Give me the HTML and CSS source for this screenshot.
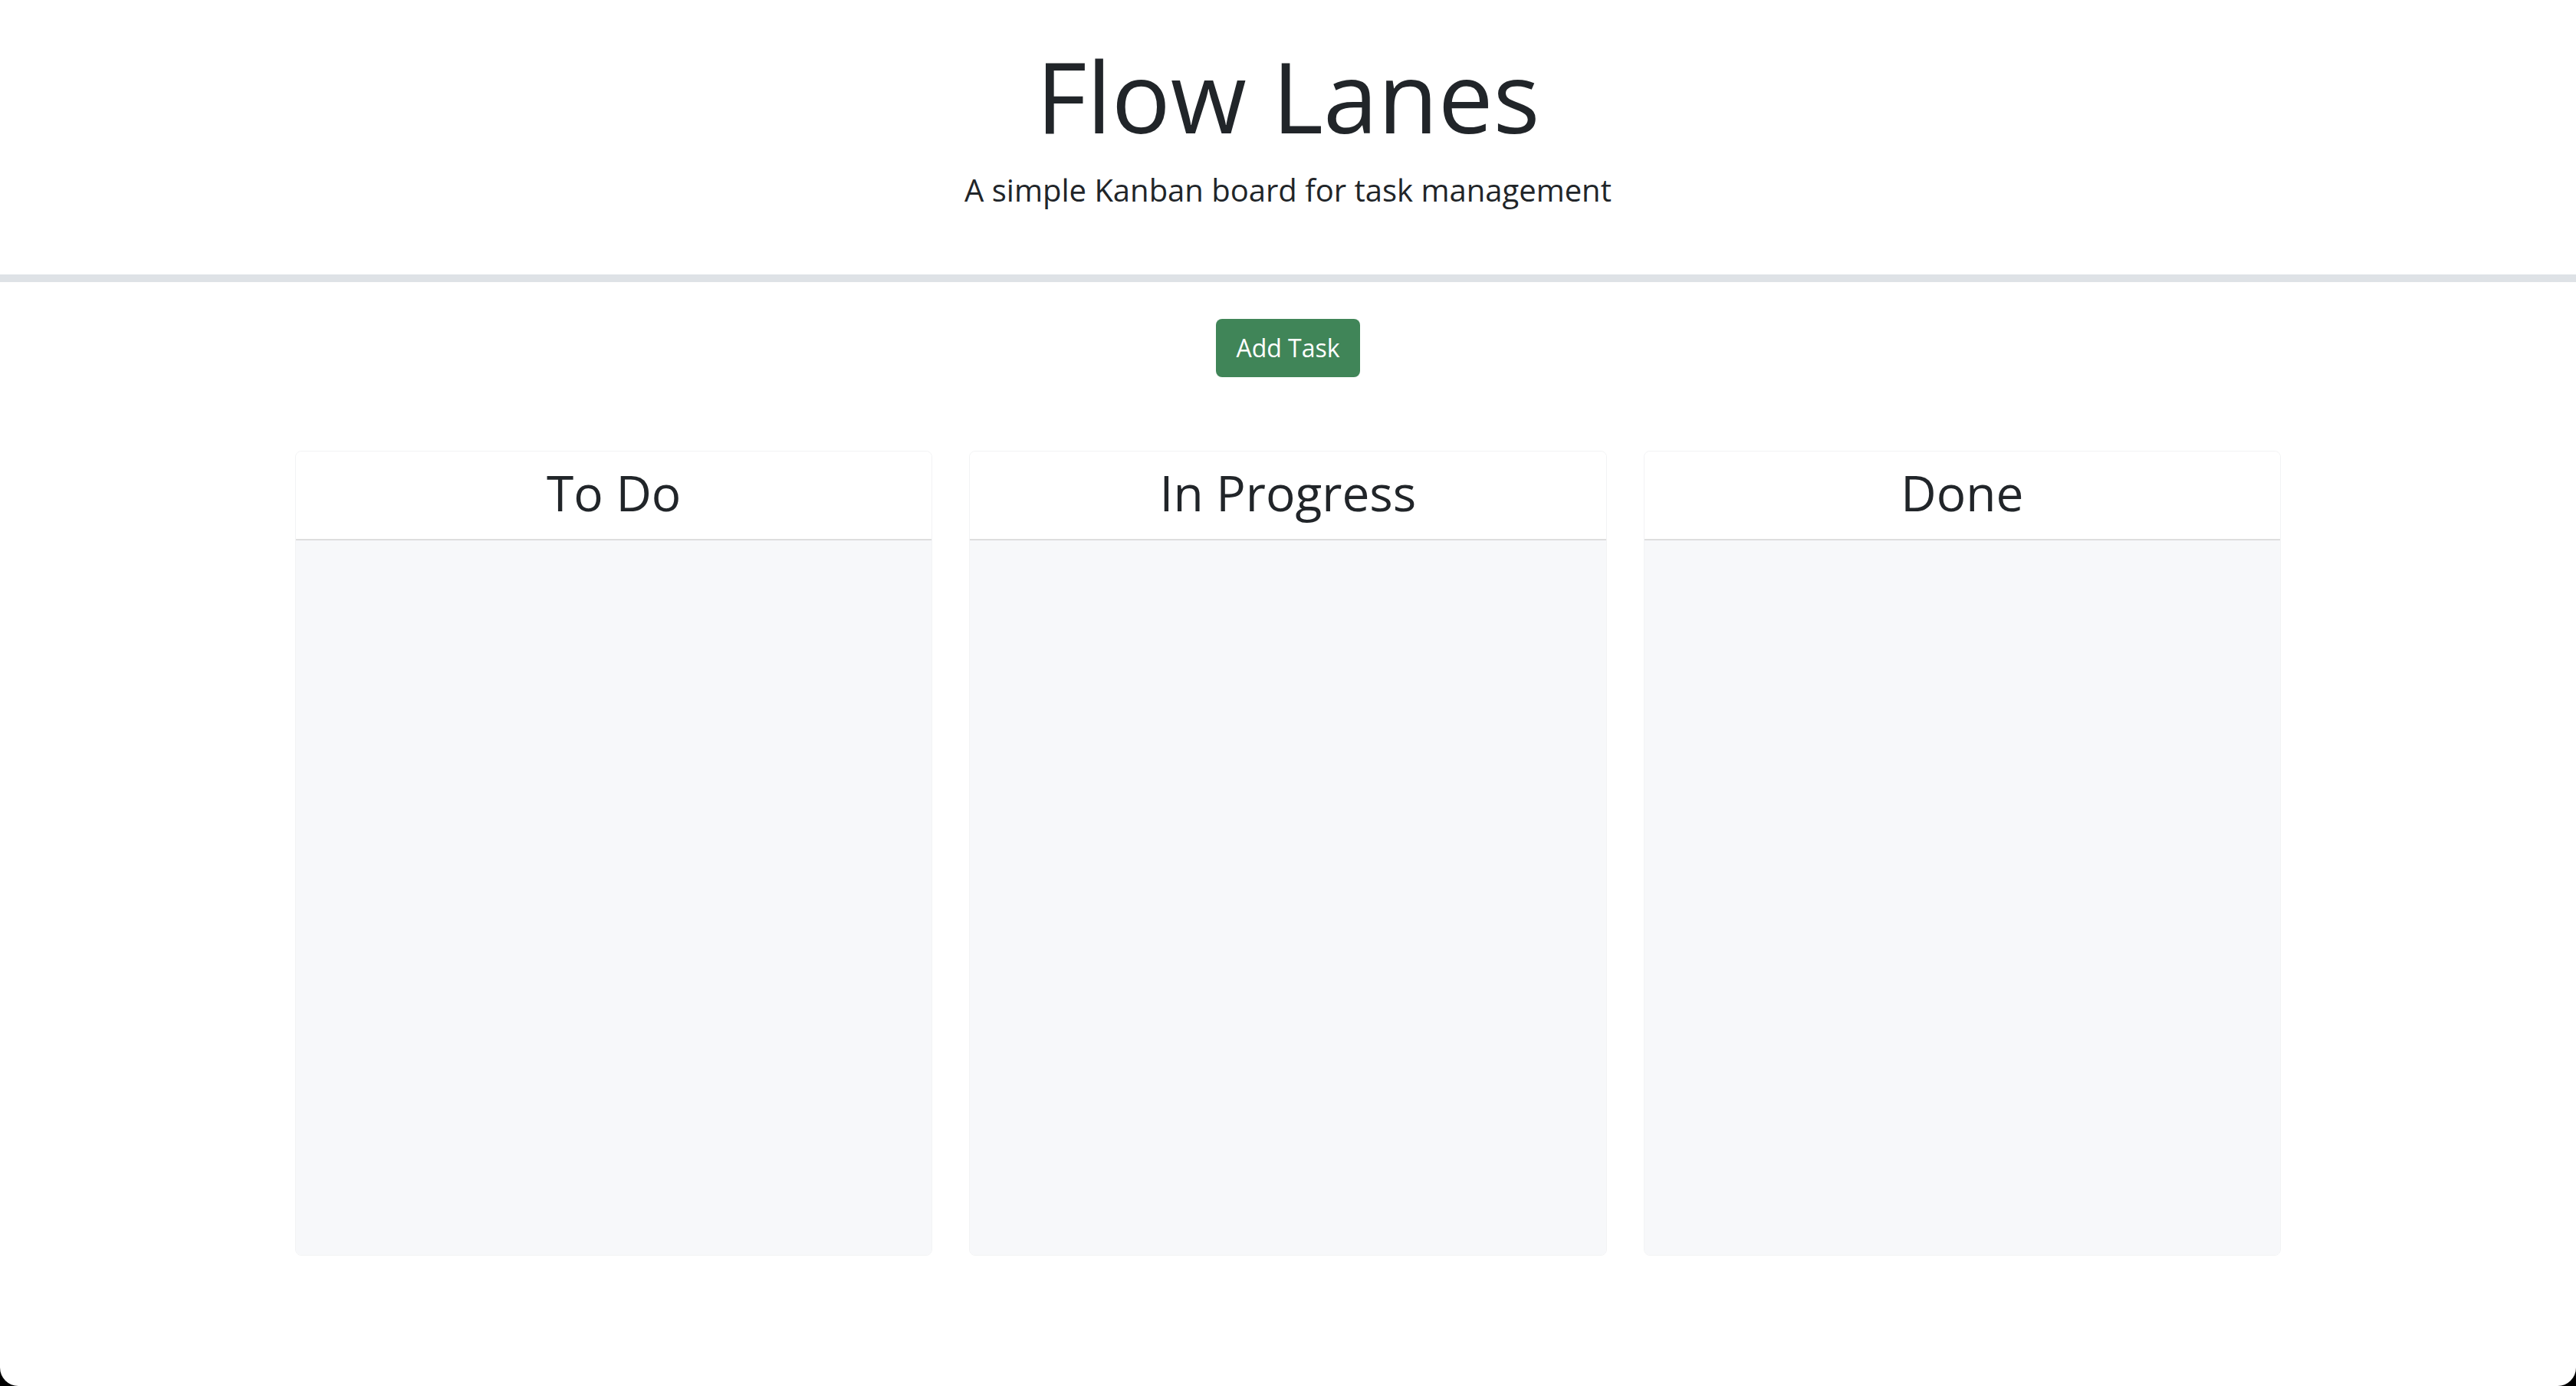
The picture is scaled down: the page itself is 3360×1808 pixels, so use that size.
FILE: index.html
```html
<!DOCTYPE html>
<html lang="en">
<head>
<meta charset="utf-8">
<title>Flow Lanes</title>
<link rel="stylesheet" href="styles.css">
</head>
<body>
<div class="page">
  <header class="hero">
    <h1 class="title">Flow Lanes</h1>
    <p class="lead">A simple Kanban board for task management</p>
  </header>
  <main class="board-wrap">
    <div class="actions">
      <button class="btn-add" type="button">Add Task</button>
    </div>
    <section class="board">
      <div class="lane">
        <div class="lane-head"><h2 class="lane-title">To Do</h2></div>
        <div class="lane-body"></div>
      </div>
      <div class="lane">
        <div class="lane-head"><h2 class="lane-title">In Progress</h2></div>
        <div class="lane-body"></div>
      </div>
      <div class="lane">
        <div class="lane-head"><h2 class="lane-title">Done</h2></div>
        <div class="lane-body"></div>
      </div>
    </section>
  </main>
</div>
</body>
</html>
```

FILE: styles.css
```css
html {
  background: #000;
  margin: 0;
  padding: 0;
}
body {
  margin: 0;
  padding: 0;
  font-family: "Open Sans", "Liberation Sans", sans-serif;
  color: #212529;
}
.page {
  background: #fff;
  height: 1808px;
  border-bottom-left-radius: 24px;
  border-bottom-right-radius: 24px;
  overflow: hidden;
}
.hero {
  text-align: center;
  padding: 48px 0 48px;
  border-bottom: 10px solid #dee2e6;
}
.title {
  margin: 0 0 16px;
  font-size: 128px;
  font-weight: 400;
  line-height: 1.2;
}
.lead {
  margin: 0 0 32px;
  font-size: 40px;
  font-weight: 400;
  line-height: 1.5;
}
.board-wrap {
  padding-top: 48px;
}
.actions {
  display: flex;
  justify-content: center;
}
.btn-add {
  font-family: "Open Sans", "Liberation Sans", sans-serif;
  font-size: 32px;
  line-height: 48px;
  padding: 13px 24px;
  width: 188px;
  height: 76px;
  color: #fff;
  background: #408558;
  border: 0;
  border-radius: 8px;
}
.board {
  width: 2590px;
  margin: 96px auto 0;
  display: grid;
  grid-template-columns: repeat(3, 1fr);
  gap: 48px;
}
.lane {
  border: 1px solid #f2f3f4;
  border-radius: 8px;
  overflow: hidden;
  display: flex;
  flex-direction: column;
}
.lane-head {
  background: #fff;
  padding: 16px 16px 22px;
  border-bottom: 2px solid #dedede;
  text-align: center;
}
.lane-title {
  margin: 0;
  font-size: 64px;
  font-weight: 400;
  line-height: 1.2;
}
.lane-body {
  background: #f7f8fa;
  height: 932px;
}
```
